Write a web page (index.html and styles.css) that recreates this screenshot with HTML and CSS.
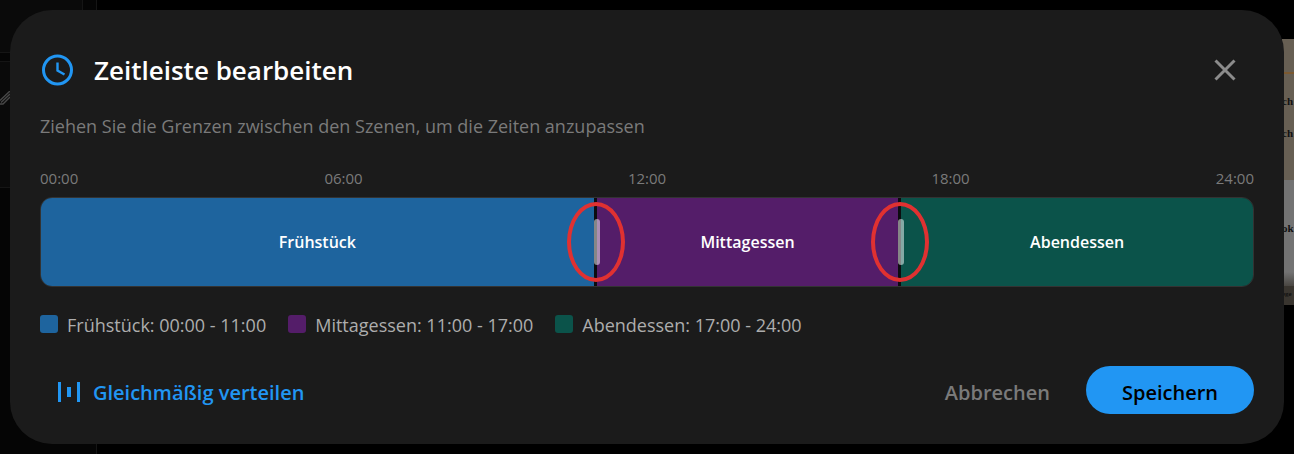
FILE: index.html
```html
<!DOCTYPE html>
<html lang="de">
<head>
  <meta charset="UTF-8" />
  <meta name="viewport" content="width=device-width, initial-scale=1.0"/>
  <title>Zeitleiste bearbeiten</title>
  <link rel="stylesheet" href="styles.css">
</head>
<body>
  <div class="page">
    <div class="sidebar">
      <div class="panel panel-top"></div>
      <div class="panel panel-edit">
        <svg class="pen" viewBox="0 0 10 14" width="10" height="14">
          <path d="M0 9.5 L10 0 M0 13 H3 L10 6 M1 11.5 L10 3" fill="none" stroke="#484848" stroke-width="1.4"/>
        </svg>
      </div>
    </div>
    <div class="divider"></div>
    <div class="preview">
      <div class="menu-card">
        <p>ch</p>
        <p>ch</p>
      </div>
      <div class="menu-photo">
        <p>ok</p>
      </div>
      <div class="menu-foot">ege</div>
    </div>
  </div>

  <div class="overlay">
    <div class="dialog" role="dialog" aria-labelledby="title">
      <div class="header">
        <svg class="clock" viewBox="0 0 36 36" width="36" height="36">
          <circle cx="17.5" cy="18" r="14" fill="none" stroke="#2196f3" stroke-width="3"/>
          <path d="M17.5 10.5 V18.5 L24.5 22.5" fill="none" stroke="#2196f3" stroke-width="2.4"/>
        </svg>
        <h1 id="title">Zeitleiste bearbeiten</h1>
        <button class="close" aria-label="Schließen">
          <svg viewBox="0 0 22 22" width="22" height="22">
            <path d="M1.5 1.5 L20.5 20.5 M20.5 1.5 L1.5 20.5" stroke="#8c8c8c" stroke-width="3"/>
          </svg>
        </button>
      </div>

      <p class="hint">Ziehen Sie die Grenzen zwischen den Szenen, um die Zeiten anzupassen</p>

      <div class="hours">
        <span>00:00</span>
        <span>06:00</span>
        <span>12:00</span>
        <span>18:00</span>
        <span>24:00</span>
      </div>

      <div class="timeline">
        <div class="segment blue" style="flex-grow: 11">Frühstück</div>
        <div class="segment purple" style="flex-grow: 6">Mittagessen
          <div class="handle"></div>
          <div class="marker"></div>
        </div>
        <div class="segment green" style="flex-grow: 7">Abendessen
          <div class="handle"></div>
          <div class="marker"></div>
        </div>
      </div>

      <div class="legend">
        <div class="entry"><span class="swatch blue"></span>Frühstück: 00:00 - 11:00</div>
        <div class="entry"><span class="swatch purple"></span>Mittagessen: 11:00 - 17:00</div>
        <div class="entry"><span class="swatch green"></span>Abendessen: 17:00 - 24:00</div>
      </div>

      <div class="actions">
        <button class="distribute">
          <svg viewBox="0 0 22 20" width="22" height="20">
            <path d="M1.5 0 V20 M20.5 0 V20" stroke="#2196f3" stroke-width="3"/>
            <path d="M11 5 V15" stroke="#2196f3" stroke-width="4"/>
          </svg>
          Gleichmäßig verteilen
        </button>
        <button class="cancel">Abbrechen</button>
        <button class="save">Speichern</button>
      </div>
    </div>
  </div>
</body>
</html>
```

FILE: styles.css
```css
* {
  box-sizing: border-box;
}
body {
  margin: 0;
  min-height: 100vh;
  background: #000;
  font-family: "Open Sans", "Noto Sans", sans-serif;
  color: #fff;
  overflow: hidden;
}
h1, p {
  margin: 0;
}
button {
  font-family: inherit;
  border: none;
  background: none;
  padding: 0;
  cursor: pointer;
}

/* page behind the dialog */
.page {
  display: flex;
  height: 100vh;
}
.sidebar {
  width: 83px;
  background: #050505;
}
.panel {
  background: #0a0a0a;
  border: 1px solid #151515;
  border-left: none;
}
.panel-top {
  height: 53px;
  border-top: none;
}
.panel-edit {
  height: 127px;
  margin-top: 8px;
  padding-top: 29px;
}
.pen {
  display: block;
}
.divider {
  width: 14px;
  background: #050505;
  border-right: 1px solid #151515;
}
.preview {
  width: 12px;
  margin: 39px 0 0 auto;
  font-family: "Liberation Serif", serif;
  font-size: 11px;
  font-weight: bold;
  line-height: 16px;
  color: #111;
  overflow: hidden;
}
.menu-card {
  height: 141px;
  padding-top: 16px;
  background: linear-gradient(#675f53 33px, #7b5930 33px, #7b5930 35px, #675f53 35px);
}
.menu-card p {
  padding-top: 38px;
  margin-bottom: -22px;
}
.menu-photo {
  height: 106px;
  padding-top: 40px;
  background: linear-gradient(#737373 92px, #4a4742);
}
.menu-foot {
  height: 19px;
  background: #39352f;
  font-size: 7px;
}

.overlay {
  position: absolute;
  inset: 0;
  padding: 10px;
}
.dialog {
  background: #1b1b1b;
  border-radius: 42px;
  padding: 36px 30px 30px;
}
.header {
  display: flex;
  align-items: center;
  height: 48px;
}
.clock {
  margin-right: 18px;
}
.header h1 {
  flex: 1;
  font-size: 26px;
  font-weight: 600;
  line-height: 36px;
}
.close {
  display: flex;
  align-items: center;
  justify-content: center;
  width: 58px;
  height: 48px;
}
.hint {
  margin-top: 20px;
  font-size: 18px;
  line-height: 24px;
  color: #7a7a7a;
}
.hours {
  display: flex;
  margin-top: 30px;
  font-size: 15px;
  line-height: 20px;
  color: #7a7a7a;
}
.hours span {
  flex: 2 1 0;
  text-align: center;
}
.hours span:first-child {
  flex-grow: 1;
  text-align: left;
}
.hours span:last-child {
  flex-grow: 1;
  text-align: right;
}
.timeline {
  display: flex;
  height: 90px;
  margin-top: 9px;
  border: 1px solid #333;
  border-radius: 12px;
}
.segment {
  position: relative;
  display: flex;
  flex-basis: 0;
  align-items: center;
  justify-content: center;
  font-size: 16px;
  font-weight: 600;
}
.segment + .segment {
  border-left: 3px solid #0c0c0f;
}
.segment:first-child {
  border-radius: 11px 0 0 11px;
}
.segment:last-child {
  border-radius: 0 11px 11px 0;
}
.blue {
  background: #1e649e;
}
.purple {
  background: #541d69;
}
.green {
  background: #0b534a;
}
.handle {
  position: absolute;
  top: 21px;
  bottom: 21px;
  left: -3px;
  width: 6px;
  border-radius: 3px;
  background: rgba(255, 255, 255, 0.5);
}
.marker {
  position: absolute;
  top: 4px;
  bottom: 4px;
  left: -30px;
  width: 58px;
  border: 4px solid #e03131;
  border-radius: 50%;
}
.legend {
  display: flex;
  gap: 22px;
  margin-top: 26px;
  font-size: 18px;
  line-height: 24px;
  color: #adadad;
}
.entry {
  display: flex;
}
.swatch {
  width: 18px;
  height: 18px;
  margin: 2px 9px 0 0;
  border-radius: 3px;
}
.actions {
  display: flex;
  margin-top: 29px;
}
.actions button {
  height: 48px;
  padding: 4px 18px 0;
  font-size: 20px;
  font-weight: 600;
}
.actions .distribute {
  display: flex;
  align-items: center;
  gap: 13px;
  margin-right: auto;
  color: #2196f3;
}
.actions .cancel {
  margin-right: 18px;
  color: #7a7a7a;
}
.actions .save {
  padding: 4px 36px 0;
  border-radius: 24px;
  background: #2196f3;
  color: #000;
}
```
